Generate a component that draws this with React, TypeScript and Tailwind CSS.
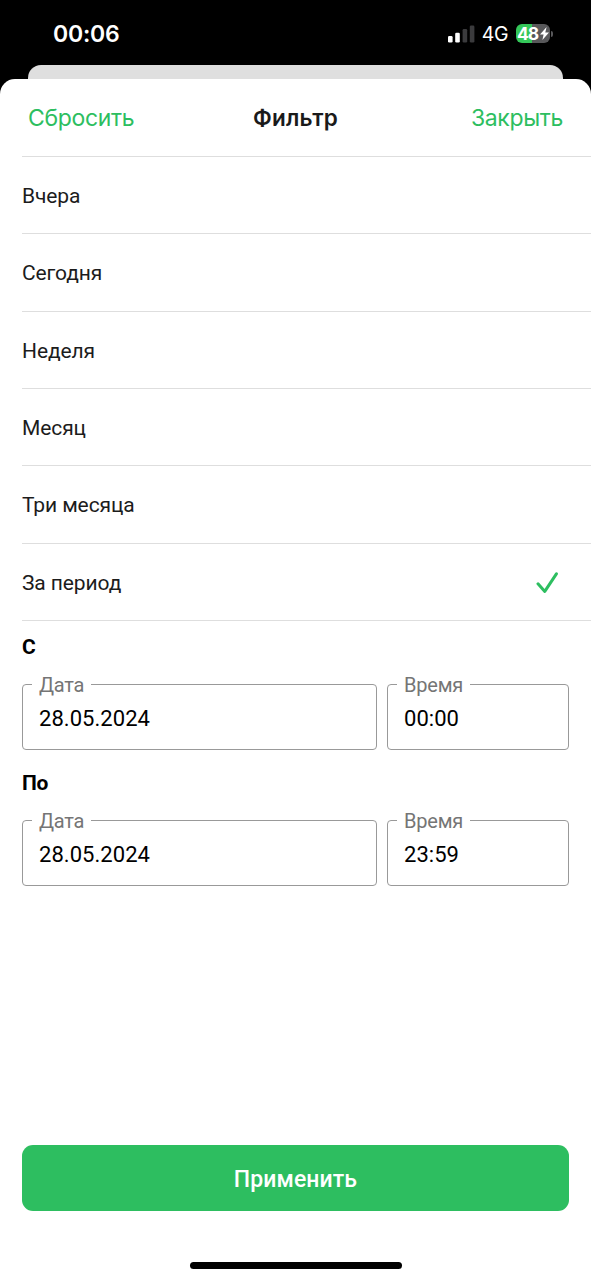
import { useState } from 'react';

const PERIODS = ['Вчера', 'Сегодня', 'Неделя', 'Месяц', 'Три месяца', 'За период'];

function StatusBar() {
  return (
    <div className="flex h-[65px] items-center justify-between pl-[53px] pr-[38px] pt-[2px] font-['Inter',sans-serif] text-white">
      <span className="text-[23px] font-semibold leading-7 tracking-[-0.2px]">00:06</span>
      <div className="flex items-center">
        <svg width="28" height="18" viewBox="0 0 28 18" className="mr-[7px]">
          <rect x="1" y="11" width="4.6" height="6.5" rx="1.3" fill="#fff" />
          <rect x="8.2" y="7.8" width="4.6" height="9.7" rx="1.3" fill="#fff" />
          <rect x="15.6" y="4" width="4.6" height="13.5" rx="1.3" fill="#3b3b3d" />
          <rect x="22.8" y="0.5" width="4.6" height="17" rx="1.3" fill="#3b3b3d" />
        </svg>
        <span className="mr-[8px] text-[19.5px] leading-6 tracking-[-0.5px]">4G</span>
        {/* Battery */}
        <div className="flex h-[19px] w-[34px] items-center justify-center rounded-[6px] bg-[linear-gradient(90deg,#34c759_48%,#58585a_48%)]">
          <span className="text-[17.5px] font-bold leading-none tracking-[-1.2px]">48</span>
          <svg width="9" height="13" viewBox="0 0 9 13" className="ml-[2px]">
            <path d="M6.6 0 0 7.4h3.6L2.4 13 9 5.6H5.3z" fill="#fff" />
          </svg>
        </div>
        <span className="ml-px h-[6px] w-[2px] rounded-r-full bg-[#58585a]" />
      </div>
    </div>
  );
}

interface FieldProps {
  label: string;
  value: string;
  className: string;
}

function Field({ label, value, className }: FieldProps) {
  return (
    <fieldset className={`h-[78px] rounded-[4px] border border-[#999] pl-[9px] ${className}`}>
      <legend className="px-[7px] pt-px text-[20px] leading-6 tracking-[-0.2px] text-[#757575]">{label}</legend>
      <div className="pl-[7px] pt-[8px] text-[22px] leading-[27px] tracking-[0.05px] text-black">{value}</div>
    </fieldset>
  );
}

interface PeriodEdgeProps {
  title: string;
  date: string;
  time: string;
}

function PeriodEdge({ title, date, time }: PeriodEdgeProps) {
  return (
    <section className="h-[136px] px-[22px] pt-[13px]">
      <h2 className="text-[21px] font-bold leading-[26px] tracking-[-0.3px] text-black">{title}</h2>
      <div className="mt-[12px] flex justify-between">
        <Field label="Дата" value={date} className="w-[355px]" />
        <Field label="Время" value={time} className="w-[182px]" />
      </div>
    </section>
  );
}

export default function App() {
  const [selected, setSelected] = useState('За период');

  return (
    <div className="flex h-[1280px] w-[591px] flex-col overflow-hidden bg-black font-['Roboto',sans-serif]">
      <StatusBar />
      <div className="mx-[28px] h-[14px] shrink-0 rounded-t-[13px] bg-[#dfdfdf]" />

      <main className="flex flex-1 flex-col rounded-t-[15px] bg-white">
        <header className="flex h-[77px] shrink-0 items-center justify-between px-[28px] font-['Inter',sans-serif] text-[23px] text-[#2dbe60]">
          <button className="w-[120px] pt-[2px] text-left tracking-[-0.35px]">Сбросить</button>
          <h1 className="text-[22.5px] font-semibold tracking-[0.2px] text-[#1a1a1a]">Фильтр</h1>
          <button className="w-[120px] pt-[2px] text-right tracking-[-0.35px]">Закрыть</button>
        </header>

        <ul className="ml-[22px] border-t border-[#dedede]">
          {PERIODS.map((period) => (
            <li key={period} className="h-[77.33px] border-b border-[#dedede]">
              <button
                onClick={() => setSelected(period)}
                className="flex h-full w-full items-center justify-between pr-[33px] pt-[3px] text-[21px] tracking-[-0.1px] text-[#1c1c1c]"
              >
                {period}
                {selected === period && (
                  <svg width="22" height="22" viewBox="0 0 22 22" fill="none">
                    <path d="M2 11.8 8.8 19.4 20.4 1.8" stroke="#2dbe60" strokeWidth="3" strokeLinecap="round" strokeLinejoin="round" />
                  </svg>
                )}
              </button>
            </li>
          ))}
        </ul>

        <PeriodEdge title="С" date="28.05.2024" time="00:00" />
        <PeriodEdge title="По" date="28.05.2024" time="23:59" />

        <footer className="mt-auto flex flex-col items-center px-[22px] pb-[11px]">
          <button className="h-[66px] w-full rounded-[11px] bg-[#2dbe60] pt-[4px] text-[23px] font-medium tracking-[0.1px] text-white">
            Применить
          </button>
          <div className="mt-[51px] h-[7px] w-[212px] rounded-full bg-black" />
        </footer>
      </main>
    </div>
  );
}
